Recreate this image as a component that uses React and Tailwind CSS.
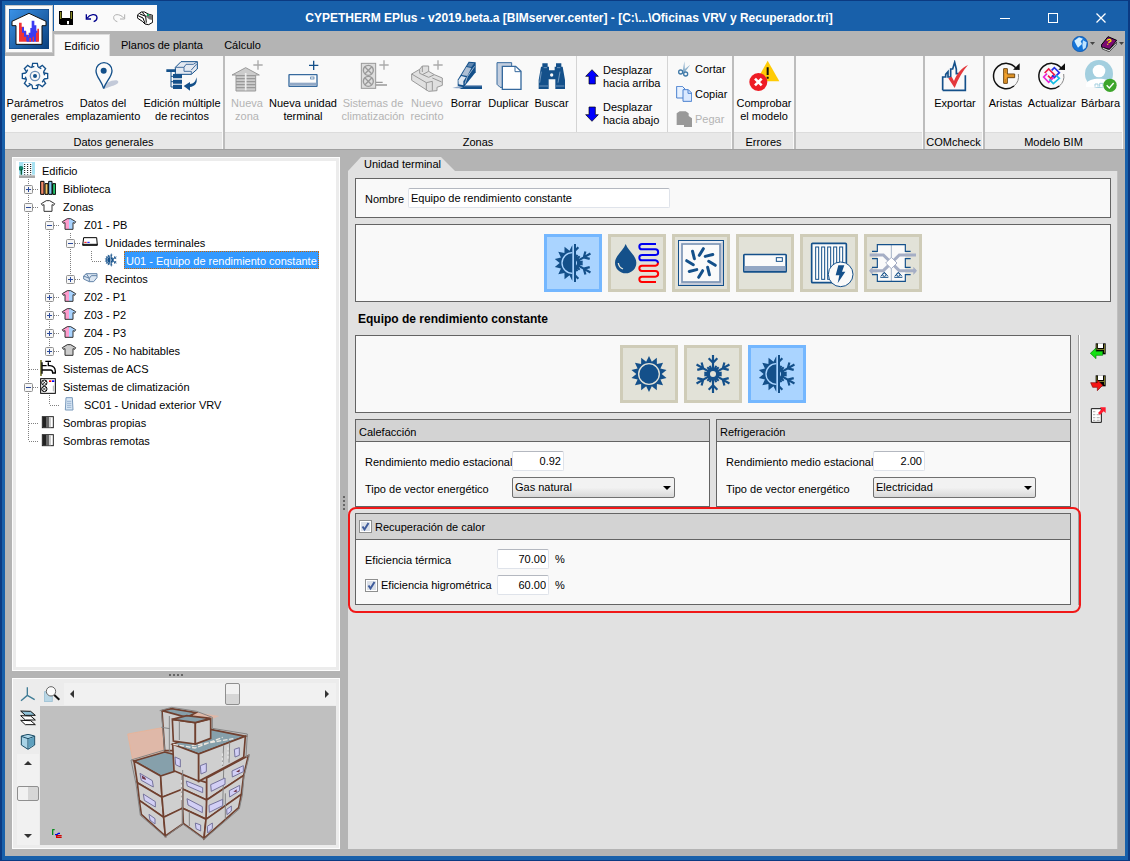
import { useState } from 'react'

const NAVY = '#14508a'

function Icon({ box, size = 'size-8', children }) {
  return (
    <svg viewBox={box} className={`${size} shrink-0`} fill="none" aria-hidden="true">
      {children}
    </svg>
  )
}

function starPoints(cx, cy, outer, inner, count) {
  const pts = []
  for (let i = 0; i < count * 2; i++) {
    const r = i % 2 === 0 ? outer : inner
    const a = (Math.PI * i) / count - Math.PI / 2
    pts.push(`${(cx + r * Math.cos(a)).toFixed(1)},${(cy + r * Math.sin(a)).toFixed(1)}`)
  }
  return pts.join(' ')
}

/* ---------- heating / cooling drawings ---------- */

function Sun({ ring }) {
  return (
    <>
      <polygon points={starPoints(0, 0, 54, 38, 14)} fill={NAVY} />
      <circle r="31" stroke={ring} strokeWidth="4" />
    </>
  )
}

function Snowflake({ hole }) {
  return (
    <>
      {[0, 60, 120, 180, 240, 300].map((a) => (
        <path
          key={a}
          transform={`rotate(${a})`}
          d="M0 -14V-57M0 -34L-13 -47M0 -34L13 -47M-7 -16L-9 -25M7 -16L9 -25"
          stroke={NAVY}
          strokeWidth="6.5"
        />
      ))}
      <circle r="20" fill={NAVY} />
      <circle r="9" fill={hole} />
    </>
  )
}

function SunSnow({ bg }) {
  return (
    <>
      <svg x="-78" y="-78" width="73" height="156" viewBox="-78 -78 73 156">
        <g transform="translate(-5 0)"><Sun ring={bg} /></g>
      </svg>
      <svg x="0" y="-78" width="78" height="156" viewBox="0 -78 78 156">
        <Snowflake hole={bg} />
      </svg>
      <path d="M3 -57V57" stroke={NAVY} strokeWidth="6" />
    </>
  )
}

function HeatCoolIcon({ bg }) {
  return <Icon box="-81 -78 156 156" size="size-[52px]"><SunSnow bg={bg} /></Icon>
}

const unitTypes = [
  { id: 'constante', label: 'Equipo de rendimiento constante', icon: <HeatCoolIcon bg="#aad4ff" /> },
  {
    id: 'agua',
    label: 'Agua',
    icon: (
      <Icon box="243 36 156 156" size="size-[52px]">
        <path d="M287 57C293 76 319 92 319 113A32 32 0 0 1 255 113C255 92 281 76 287 57Z" fill={NAVY} />
        <path d="M265 114C266 123 271 129 279 132" stroke="#e6e6da" strokeWidth="4" />
        <path d="M378 57H336A8 8 0 0 0 336 73H376A8 8 0 0 1 376 90H336A8 8 0 0 0 336 106H376A9 9 0 0 1 384 115" stroke="#0000f0" strokeWidth="6" />
        <path d="M384 113A9 9 0 0 1 376 122H336A8 8 0 0 0 336 138H376A8 8 0 0 1 376 155H336A8 8 0 0 0 336 171H378" stroke="#f00" strokeWidth="6" />
      </Icon>
    ),
  },
  {
    id: 'difusor',
    label: 'Difusor',
    icon: (
      <Icon box="435 36 156 156" size="size-[52px]">
        <rect x="445.500" y="46.500" width="135" height="135" fill="#c5cbd8" stroke={NAVY} strokeWidth="3" />
        <path d="M447 180V48H579L570 57H456V171Z" fill="#eceef4" />
        <rect x="456" y="57" width="114" height="114" fill="#fafafa" stroke="#7d95b5" strokeWidth="5" />
        {[0, 45, 90, 135, 180, 225, 270, 315].map((a) => (
          <path key={a} transform={`translate(513 114) rotate(${a})`} d="M-5 -23L7 -43" stroke={NAVY} strokeWidth="9" strokeLinecap="round" />
        ))}
      </Icon>
    ),
  },
  {
    id: 'split',
    label: 'Unidad interior',
    icon: (
      <Icon box="627 36 156 156" size="size-[52px]">
        <rect x="641.500" y="88.500" width="127" height="52" rx="2" fill="#fafafa" stroke={NAVY} strokeWidth="5" />
        <path d="M644 123H766V138H644Z" fill="#93a7c4" />
        <rect x="739" y="98" width="18" height="11" fill="#fff" stroke={NAVY} strokeWidth="3" />
      </Icon>
    ),
  },
  {
    id: 'electrico',
    label: 'Radiador eléctrico',
    icon: (
      <Icon box="819 36 156 156" size="size-[52px]">
        <rect x="845" y="55" width="104" height="118" rx="3" fill="#fafafa" stroke={NAVY} strokeWidth="5" />
        {[857, 875, 893, 911, 929].map((x) => (
          <rect key={x} x={x} y="66" width="9" height="97" fill="#fff" stroke={NAVY} strokeWidth="3" />
        ))}
        <circle cx="932" cy="148" r="37" fill="#fafafa" stroke={NAVY} strokeWidth="3" />
        <path d="M925 121H943L936 140H946L923 175L928 151H917Z" fill={NAVY} />
      </Icon>
    ),
  },
  {
    id: 'recuperador',
    label: 'Recuperador',
    icon: (
      <Icon box="1011 36 156 156" size="size-[52px]">
        <path d="M1042 58H1126V170H1042Z" fill="#fafafa" />
        <path d="M1084 59V170" stroke="#788eae" strokeWidth="2" />
        <path d="M1019 90H1060L1108 137H1157M1158 90H1108L1060 137H1022" stroke="#a5aec5" strokeWidth="9" />
        <path d="M1028 125L1017 137L1028 150ZM1150 125L1161 137L1150 150Z" fill="#a5aec5" />
        <path d="M1084 97L1101 114L1084 131L1067 114Z" fill="#fff" stroke="#a5aec5" strokeWidth="3" />
        <path d="M1026 79H1042V59H1126V79H1142M1026 101H1042V127H1026M1142 101H1126V127H1142M1026 149H1042V169H1126V149H1142" stroke={NAVY} strokeWidth="3.500" />
        {[1063, 1105].map((x) => (
          <g key={x} stroke={NAVY} strokeWidth="3">
            <circle cx={x} cy="149" r="5" />
            <path d={`M${x - 12} 157H${x + 12}M${x - 11} 154L${x} 142L${x + 11} 154`} />
          </g>
        ))}
      </Icon>
    ),
  },
]

const modes = [
  { id: 'calor', label: 'Calefacción', icon: (bg) => <Icon box="-78 -78 156 156" size="size-[52px]"><Sun ring={bg} /></Icon> },
  { id: 'frio', label: 'Refrigeración', icon: (bg) => <Icon box="-78 -78 156 156" size="size-[52px]"><Snowflake hole={bg} /></Icon> },
  { id: 'mixto', label: 'Calefacción y refrigeración', icon: (bg) => <HeatCoolIcon bg={bg} /> },
]

function TileButton({ label, active, onClick, children }) {
  return (
    <button
      type="button"
      aria-label={label}
      aria-pressed={active}
      onClick={onClick}
      className={`size-[58px] border-3 ${active ? 'border-[#74b7ff] bg-[#aad4ff]' : 'border-[#cfccb8] bg-[#e2e2d8]'}`}
    >
      {children}
    </button>
  )
}

/* ---------- ribbon icons ---------- */

function Plus({ x, y, color }) {
  return <path d={`M${x - 14} ${y}H${x + 14}M${x} ${y - 14}V${y + 14}`} stroke={color} strokeWidth="4" />
}

const GearIcon = (
  <Icon box="57 180 96 96">
    {[0, 45, 90, 135, 180, 225, 270, 315].map((a) => (
      <path key={a} transform={`rotate(${a} 105 228)`} d="M96 201L98 190H112L114 201" fill="#fff" stroke={NAVY} strokeWidth="4" />
    ))}
    <circle cx="105" cy="228" r="28" fill="#f9f9f9" />
    {[0, 45, 90, 135, 180, 225, 270, 315].map((a) => (
      <path key={a} transform={`rotate(${a} 105 228)`} d="M114 201L124 206" stroke={NAVY} strokeWidth="4" />
    ))}
    <circle cx="105" cy="228" r="14" stroke="#6d90b8" strokeWidth="4" />
    <circle cx="105" cy="228" r="6" fill={NAVY} />
  </Icon>
)

const PinIcon = (
  <Icon box="261 180 96 96">
    <path d="M312 267C316 248 332 240 350 241C362 246 350 255 336 258Z" fill="#c3cad9" />
    <path d="M311 266C306 244 288 231 288 212A23 23 0 0 1 336 212C336 231 317 244 311 266Z" fill="#fafafa" stroke={NAVY} strokeWidth="4" />
    <circle cx="311" cy="212" r="9" fill={NAVY} />
  </Icon>
)

const MultiEditIcon = (
  <Icon box="498 180 96 96">
    <path d="M526 202L543 185H592V207L574 223H526Z" fill="#e4e9f1" stroke={NAVY} strokeWidth="3" />
    <path d="M526 202H552L558 193H580L592 185M552 202V214H574V223M574 210L590 192" stroke="#456f9f" strokeWidth="3" />
    <path d="M499 208H528V216H499ZM519 222H546V235H519ZM519 239H546V251H519ZM519 254H546V267H519Z" fill={NAVY} />
    <path d="M513 216V261H519M513 229H519M513 245H519" stroke={NAVY} strokeWidth="3" />
    <path d="M589 232C594 250 584 260 570 261V272L551 258L570 246V252C580 252 587 246 589 232Z" fill={NAVY} />
  </Icon>
)

const NewZoneIcon = (
  <Icon box="33 30 96 96">
    <path d="M36 75L77 53L118 75H107V123H48V75Z" fill="#ccc" stroke="#999" strokeWidth="3" />
    <path d="M48 77H107M48 86H107M48 95H107M48 104H107M48 113H107" stroke="#999" strokeWidth="4" />
    <path d="M77 69V121" stroke="#eee" strokeWidth="5" />
    <Plus x={114} y={45} color="#aaa" />
  </Icon>
)

const NewUnitIcon = (
  <Icon box="201 30 96 96">
    <rect x="207" y="74" width="84" height="35" rx="1" fill="#fcfcfc" stroke="#376a9e" strokeWidth="4" />
    <path d="M209 98H289V107H209Z" fill="#91a8c6" />
    <rect x="272" y="81" width="10" height="6" stroke="#376a9e" strokeWidth="2" />
    <Plus x={281} y={46} color={NAVY} />
  </Icon>
)

const SystemsIcon = (
  <Icon box="411 30 96 96">
    <rect x="424" y="40" width="43" height="75" fill="#ddd" stroke="#999" strokeWidth="3" />
    {[61, 94].map((y) => (
      <g key={y} stroke="#999" strokeWidth="4">
        <circle cx="445" cy={y} r="15" />
        <path d={`M435 ${y - 10}L455 ${y + 10}M455 ${y - 10}L435 ${y + 10}`} />
      </g>
    ))}
    <path d="M468 97H488M468 105H501" stroke="#999" strokeWidth="4" />
    <Plus x={492} y={45} color="#aaa" />
  </Icon>
)

const NewRoomIcon = (
  <Icon box="572 30 96 96">
    <path d="M574 72L598 58L606 48H625V64L642 74L666 84V106L650 112V122L625 124L574 91Z" fill="#e0e0e0" stroke="#999" strokeWidth="3" />
    <path d="M574 72L618 98V121M618 98L636 94V122M598 58V70L625 82L642 74M606 48V66M625 64L606 74M636 84L664 96" stroke="#999" strokeWidth="3" />
    <Plus x={653} y={45} color="#aaa" />
  </Icon>
)

const EraseIcon = (
  <Icon box="690 30 96 96">
    <path d="M697 114L730 105H787V115H710Z" fill="#8ba5c5" />
    <path d="M735 109H787V117H718Z" fill={NAVY} />
    <path d="M713 89L746 35L767 37V67L731 112L713 107Z" fill={NAVY} />
    <path d="M725 75L739 51L754 54L742 78Z" fill="#aebfd4" />
    <path d="M715 91L724 78L738 82L730 94V106L716 103Z" fill="#dfe7f0" />
    <path d="M735 101L742 80L764 49" stroke="#9fb6d0" strokeWidth="3" />
    <path d="M741 49L754 51L763 40L748 38Z" fill="#5f86b0" />
  </Icon>
)

const DuplicateIcon = (
  <Icon box="817 30 96 96">
    <path d="M829 38H873V112H838L829 103Z" fill="#c4cfdf" stroke="#376a9e" strokeWidth="3" />
    <path d="M845 49H885L901 64V118H845Z" fill="#fff" stroke="#376a9e" strokeWidth="4" />
    <path d="M883 49V65H901" stroke="#376a9e" strokeWidth="3" />
  </Icon>
)

const SearchIcon = (
  <Icon box="946 30 96 96">
    <path d="M965 40H981V50H985V61H1002V50H1006V40H1022V50H1026L1033 90V117H1004V88H984V117H954V90L961 50H965Z" fill={NAVY} />
    <path d="M962 65L957 98M1018 65L1012 98M969 53H979M1009 53H1019M956 108H982M1006 108H1031" stroke="#9ab6d3" strokeWidth="2" />
    <circle cx="993" cy="75" r="5" fill="#f9f9f9" />
  </Icon>
)

const ErrorsIcon = (
  <Icon box="534 30 96 96">
    <path d="M593 32L628 94H559Z" fill="#ffcb05" />
    <path d="M593 52V75M593 80V86" stroke="#111" strokeWidth="6" />
    <circle cx="565" cy="96" r="27" fill="#ee1c25" />
    <path d="M555 86L575 106M575 86L555 106" stroke="#fff" strokeWidth="8" />
  </Icon>
)

const ExportIcon = (
  <Icon box="114 180 96 96">
    <path d="M125 271V231H134V223L141 215V231H149V207H155L161 187L166 207V221H180M193 226V271H125" stroke={NAVY} strokeWidth="5" />
    <path d="M142 235L152 230L159 243C167 223 181 204 201 195C185 213 172 236 161 264Z" fill="#e4383c" />
  </Icon>
)

function RefreshRing({ x, y }) {
  return (
    <>
      <path d={`M${x + 24} ${y + 30}A38 38 0 1 1 ${x + 29} ${y - 25}`} stroke="#111" strokeWidth="4.5" />
      <path d={`M${x + 37} ${y - 6}A38 38 0 0 1 ${x + 24} ${y + 30}`} stroke="#888" strokeWidth="3" />
      <path d={`M${x + 21} ${y - 19}L${x + 41} ${y - 18}V${y - 38}Z`} fill="#111" />
    </>
  )
}

const EdgesIcon = (
  <Icon box="267 180 96 96">
    <RefreshRing x={315} y={228} />
    <path d="M308 206H319V222H341V233H319V250H308Z" fill="#f1a12c" stroke="#6b4514" strokeWidth="3" />
    <path d="M319 228H341M313 209V219M313 237V247" stroke="#b2701a" strokeWidth="2" />
  </Icon>
)

const UpdateIcon = (
  <Icon box="408 180 96 96">
    <RefreshRing x={454} y={228} />
    <path d="M434 219L446 207L463 224L452 235L444 227" stroke="#f01848" strokeWidth="5" />
    <path d="M455 211L463 203L478 218L463 233L456 226" stroke="#2330e8" strokeWidth="5" />
    <path d="M441 221L431 231L446 247L461 232" stroke="#e925d8" strokeWidth="5" />
    <path d="M448 238L460 251L478 235L468 226" stroke="#12bfe4" strokeWidth="5" />
  </Icon>
)

const UserIcon = (
  <Icon box="552 180 96 96">
    <circle cx="594" cy="222" r="42" fill="#a3cfdf" />
    <circle cx="594" cy="213" r="19" fill="#fff" />
    <path d="M555 261V252C560 240 575 236 594 236C613 236 628 240 633 252V261Z" fill="#fff" />
    <path d="M582 260V252H591V260M596 260V250H606V260" stroke="#a3cfdf" strokeWidth="3" />
    <circle cx="627" cy="256" r="20" fill="#3da52b" />
    <path d="M617 256L625 264L638 249" stroke="#fff" strokeWidth="4" />
  </Icon>
)

const MoveUpIcon = (
  <Icon box="41 38 48 48" size="size-4">
    <path d="M65 40L84 60H75V83H56V60H46Z" fill="#0000fe" stroke="#000" strokeWidth="2" />
  </Icon>
)

const MoveDownIcon = (
  <Icon box="41 151 48 48" size="size-4">
    <path d="M65 197L84 177H75V154H56V177H46Z" fill="#0000fe" stroke="#000" strokeWidth="2" />
  </Icon>
)

const CutIcon = (
  <Icon box="317 33 48 48" size="size-4">
    <path d="M342 34L344 64L337 64ZM360 44L341 70L336 63Z" fill="#8fb2cd" />
    <circle cx="331" cy="66" r="6" stroke="#3f79a8" strokeWidth="4" />
    <circle cx="346" cy="72" r="6" stroke="#3f79a8" strokeWidth="4" />
  </Icon>
)

const CopyIcon = (
  <Icon box="317 108 48 48" size="size-4">
    <path d="M319 109H336L344 117V144H319Z" fill="#e8f2ff" stroke="#4a80cf" strokeWidth="3" />
    <path d="M338 119H354L364 129V154H338Z" fill="#dbe9ff" stroke="#4a80cf" strokeWidth="3" />
    <path d="M353 119V130H364" stroke="#4a80cf" strokeWidth="3" />
  </Icon>
)

const PasteIcon = (
  <Icon box="317 183 48 48" size="size-4">
    <path d="M319 190L328 184H346L355 190V198L365 205V231H341V225H319Z" fill="#999" />
  </Icon>
)

/* ---------- ribbon ---------- */

function RibbonButton({ icon, lines, width, disabled }) {
  return (
    <button
      type="button"
      disabled={disabled}
      className={`${width} flex shrink-0 flex-col items-center pt-1 leading-[13px] whitespace-nowrap disabled:text-[#b4b4b4]`}
    >
      {icon}
      <span className="mt-[5px] flex flex-col items-center">
        {lines.map((line) => <span key={line}>{line}</span>)}
      </span>
    </button>
  )
}

function RibbonGroup({ title, className, children }) {
  return (
    <section className={`flex flex-col border-r-2 border-[#bdbdbd] ${className}`}>
      <div className="flex h-[76px]">{children}</div>
      <h2 className="mr-px h-[17px] border-t border-[#dcdcdc] bg-[#e8e8e8] text-center leading-[18px]">{title}</h2>
    </section>
  )
}

function SmallCommand({ icon, disabled, children }) {
  return (
    <button type="button" disabled={disabled} className="flex items-center gap-[3px] text-left leading-[13px] disabled:text-[#b4b4b4]">
      {icon}
      <span>{children}</span>
    </button>
  )
}

function Ribbon() {
  return (
    <div className="flex border-b border-[#a0a0a0] bg-[#f9f9f9]">
      <RibbonGroup title="Datos generales" className="w-[220px]">
        <RibbonButton width="w-[60px]" icon={GearIcon} lines={['Parámetros', 'generales']} />
        <RibbonButton width="w-[76px]" icon={PinIcon} lines={['Datos del', 'emplazamiento']} />
        <RibbonButton width="w-[82px]" icon={MultiEditIcon} lines={['Edición múltiple', 'de recintos']} />
      </RibbonGroup>
      <RibbonGroup title="Zonas" className="w-[509px]">
        <RibbonButton width="w-[44px]" icon={NewZoneIcon} lines={['Nueva', 'zona']} disabled />
        <RibbonButton width="w-[68px]" icon={NewUnitIcon} lines={['Nueva unidad', 'terminal']} />
        <RibbonButton width="w-[72px]" icon={SystemsIcon} lines={['Sistemas de', 'climatización']} disabled />
        <RibbonButton width="w-[36px]" icon={NewRoomIcon} lines={['Nuevo', 'recinto']} disabled />
        <RibbonButton width="w-[42px]" icon={EraseIcon} lines={['Borrar']} />
        <RibbonButton width="w-[43px]" icon={DuplicateIcon} lines={['Duplicar']} />
        <RibbonButton width="w-[43px]" icon={SearchIcon} lines={['Buscar']} />
        <div className="ml-[3px] flex w-[92px] flex-col gap-[11px] border-x border-[#d4d4d4] pt-2 pl-[7px]">
          <SmallCommand icon={MoveUpIcon}>Desplazar<br />hacia arriba</SmallCommand>
          <SmallCommand icon={MoveDownIcon}>Desplazar<br />hacia abajo</SmallCommand>
        </div>
        <div className="flex flex-col gap-[9px] pt-[5px] pl-2">
          <SmallCommand icon={CutIcon}>Cortar</SmallCommand>
          <SmallCommand icon={CopyIcon}>Copiar</SmallCommand>
          <SmallCommand icon={PasteIcon} disabled>Pegar</SmallCommand>
        </div>
      </RibbonGroup>
      <RibbonGroup title="Errores" className="w-[62px]">
        <RibbonButton width="w-[60px]" icon={ErrorsIcon} lines={['Comprobar', 'el modelo']} />
      </RibbonGroup>
      <RibbonGroup title="" className="flex-1" />
      <RibbonGroup title="COMcheck" className="w-[60px]">
        <RibbonButton width="w-[60px]" icon={ExportIcon} lines={['Exportar']} />
      </RibbonGroup>
      <RibbonGroup title="Modelo BIM" className="w-[140px]">
        <RibbonButton width="w-[41px]" icon={EdgesIcon} lines={['Aristas']} />
        <RibbonButton width="w-[52px]" icon={UpdateIcon} lines={['Actualizar']} />
        <RibbonButton width="w-[45px]" icon={UserIcon} lines={['Bárbara']} />
      </RibbonGroup>
    </div>
  )
}

/* ---------- title bar ---------- */

function AppLogo() {
  return (
    <div className="absolute top-1 left-0 z-10 size-12 border border-[#c8c8c8] bg-[#fafafa] p-[3px]">
      <svg viewBox="27 27 120 120" className="size-10" aria-hidden="true">
        <defs>
          <linearGradient id="logoBg" x1="0" y1="0" x2="1" y2="1">
            <stop offset="0" stopColor="#3b93e8" />
            <stop offset="1" stopColor="#0a3f7c" />
          </linearGradient>
        </defs>
        <rect x="27" y="27" width="120" height="120" fill="url(#logoBg)" stroke="#0c3f78" strokeWidth="3" />
        <path d="M87 40L138 64V77H126V133H48V77H36V64Z" fill="#fff" stroke="#111" strokeWidth="3" />
        <path d="M57 125V68H65V80H72V94H79V105H87V114H94V125Z" fill="#f03434" />
        <path d="M80 125V112H86V98H91V84H95V62H103V76H109V92H113V125Z" fill="#3b3bf2" />
        <path d="M66 82H72V92H78V104H84V122H79V110H72V98H66Z" fill="#3b3bf2" />
        <path d="M108 125V98H112V86H117V125ZM98 125V110H102V125ZM88 125V114H93V125Z" fill="#f03434" />
      </svg>
    </div>
  )
}

function QuickAccess() {
  return (
    <div className="ml-[49px] flex h-[26px] w-[103px] items-center justify-between bg-[#fafafa] px-[4px]">
      <button type="button" aria-label="Guardar">
        <Icon box="174 30 48 48" size="size-4">
          <path d="M177 33H219V75H182L177 70Z" fill="#000" />
          <path d="M186 33H210V54H186Z" fill="#fff" />
          <path d="M180 36H184V57H212V36H216V57H180Z" fill="#8a8a28" />
          <path d="M201 63H207V73H201Z" fill="#fff" />
        </Icon>
      </button>
      <button type="button" aria-label="Deshacer">
        <Icon box="252 30 48 48" size="size-4">
          <path d="M259 43V57H273M262 54C268 44 290 38 291 53C291 60 286 63 281 65" stroke="#00008c" strokeWidth="4" />
        </Icon>
      </button>
      <button type="button" aria-label="Rehacer" disabled>
        <Icon box="330 30 48 48" size="size-4">
          <path d="M371 43V57H357M368 54C362 44 338 38 338 53C338 60 343 63 349 65" stroke="#b0b0b0" strokeWidth="3" />
        </Icon>
      </button>
      <button type="button" aria-label="Imprimir">
        <Icon box="408 30 48 48" size="size-4">
          <path d="M409 45L421 36H431L441 42L455 46V67L443 74L432 72L424 64L409 54Z" fill="#fff" stroke="#000" strokeWidth="3" />
          <path d="M434 48L444 43L454 48V60L444 58Z" fill="#777" />
          <path d="M411 47L426 54L432 70M417 42L434 49L436 68M424 37L434 49" stroke="#000" strokeWidth="3" />
          <path d="M438 42H444V48H438Z" fill="#17a55c" />
        </Icon>
      </button>
    </div>
  )
}

function Header() {
  return (
    <header className="relative">
      <AppLogo />
      <div className="flex h-[30px] pt-1">
        <QuickAccess />
        <h1 className="flex-1 text-center text-[12px] leading-[27px] font-bold text-white">
          CYPETHERM EPlus - v2019.beta.a [BIMserver.center] - [C:\...\Oficinas VRV y Recuperador.tri]
        </h1>
        <div className="flex h-[26px] w-36 text-white">
          <button type="button" aria-label="Minimizar" className="grid flex-1 place-items-center">
            <Icon box="0 0 12 12" size="size-3"><path d="M1 6.500H11" stroke="#fff" /></Icon>
          </button>
          <button type="button" aria-label="Maximizar" className="grid flex-1 place-items-center">
            <Icon box="0 0 12 12" size="size-3"><rect x="1.500" y="1.500" width="9" height="9" stroke="#fff" /></Icon>
          </button>
          <button type="button" aria-label="Cerrar" className="grid flex-1 place-items-center">
            <Icon box="0 0 12 12" size="size-3"><path d="M1.500 1.500L10.500 10.500M10.500 1.500L1.500 10.500" stroke="#fff" strokeWidth="1.300" /></Icon>
          </button>
        </div>
      </div>
      <div className="flex h-[25px] items-end bg-[#b4b4b4] pl-[49px]">
        <nav className="flex h-[22px] leading-5">
          <button type="button" className="w-14 border-x border-t border-[#dcdcdc] bg-[#f9f9f9]">Edificio</button>
          <button type="button" className="w-[104px]">Planos de planta</button>
          <button type="button" className="w-[57px]">Cálculo</button>
        </nav>
        <div className="ml-auto flex h-full items-center gap-1.5 pr-px">
          <button type="button" aria-label="Idioma" className="flex items-center gap-0.5">
            <Icon box="515 105 48 48" size="size-4">
              <circle cx="539" cy="129" r="23" fill="#1474d8" stroke="#0b4fa5" strokeWidth="2" />
              <path d="M522 119L536 109L548 113L541 121L545 129L533 140L527 130Z" fill="#d6efff" />
              <path d="M548 118L559 124L556 140L548 146L546 132Z" fill="#bfe3ff" />
            </Icon>
            <Icon box="0 0 5 3" size="h-[3px] w-[5px]"><path d="M0 0H5L2.500 3Z" fill="#444" /></Icon>
          </button>
          <button type="button" aria-label="Ayuda" className="flex items-center gap-0.5">
            <Icon box="600 105 48 48" size="size-4">
              <path d="M601 132L621 107L647 118L625 145L601 138Z" fill="#7a0a72" stroke="#000" strokeWidth="3" />
              <path d="M604 139L625 147L647 124V129L625 152L604 144Z" fill="#fff" stroke="#000" strokeWidth="2" />
              <path d="M618 119C622 112 633 116 629 121L622 125M620 128V131" stroke="#ffe600" strokeWidth="4" />
            </Icon>
            <Icon box="0 0 5 3" size="h-[3px] w-[5px]"><path d="M0 0H5L2.500 3Z" fill="#444" /></Icon>
          </button>
        </div>
      </div>
    </header>
  )
}

/* ---------- project tree ---------- */

function HouseIcon({ left, right }) {
  return (
    <Icon box="183 201 48 48" size="size-4">
      <path d="M207 208H202L187 218L190 223L195 221V241H207Z" fill={left} />
      <path d="M207 208H212L227 218L224 223L219 221V241H207Z" fill={right} />
      <path d="M202 209H212L227 218L224 223L219 221V241H195V221L190 223L187 218Z" stroke="#333" strokeWidth="3" />
    </Icon>
  )
}

const BuildingIcon = (
  <Icon box="57 39 48 48" size="size-4">
    <path d="M57 39H105V77H57Z" fill="#a8e2f2" />
    <path d="M70 41H96V77H70Z" fill="#fff" />
    <path d="M74 45V77M83 45V77M92 45V77" stroke="#000" strokeWidth="3" strokeDasharray="3 3" />
    <path d="M57 79H105V87H57Z" fill="#a9a9a9" />
    <circle cx="63" cy="58" r="7" fill="#12826a" />
    <path d="M64 60V77" stroke="#0c5b34" strokeWidth="4" />
  </Icon>
)

const BooksIcon = (
  <Icon box="120 93 48 48" size="size-4">
    <g stroke="#000" strokeWidth="3">
      <path d="M122 97H132V136H122Z" fill="#f08a68" />
      <path d="M135 104H144V136H135Z" fill="#f2c566" />
      <path d="M146 97H156V136H146Z" fill="#7fc4ee" />
      <path d="M158 104H167V136H158Z" fill="#27c46c" />
    </g>
  </Icon>
)

const TerminalIcon = (
  <Icon box="246 255 48 48" size="size-4">
    <path d="M251 266H290L292 289H248Z" fill="#fff" stroke="#000" strokeWidth="3" />
    <path d="M248 286H292" stroke="#000" strokeWidth="3" />
    <path d="M253 280H260" stroke="#f00" strokeWidth="3" />
    <path d="M262 280H269" stroke="#00f" strokeWidth="3" />
  </Icon>
)

const RoomsIcon = (
  <Icon box="246 363 48 48" size="size-4">
    <path d="M251 381L259 374H291V386L281 398H268L251 390Z" fill="#dbe6f2" stroke="#6484a8" strokeWidth="3" />
    <path d="M251 381L268 388V398M268 388L274 380H291M259 374L268 388" stroke="#6484a8" strokeWidth="3" />
  </Icon>
)

const TapIcon = (
  <Icon box="120 633 48 48" size="size-4">
    <path d="M120 633H126V681H120Z" fill="#8a8a4c" />
    <path d="M126 640V674M126 650H140M126 663H151C157 663 158 667 158 672H166C167 657 160 650 150 650H145V640M136 637H153" stroke="#000" strokeWidth="4" />
  </Icon>
)

const ClimateIcon = (
  <Icon box="120 687 48 48" size="size-4">
    <rect x="122" y="689" width="44" height="44" fill="#fff" stroke="#000" strokeWidth="3" />
    <circle cx="133" cy="701" r="8" stroke="#000" strokeWidth="3" />
    <circle cx="133" cy="720" r="8" stroke="#000" strokeWidth="3" />
    <path d="M127 695L139 707M139 695L127 707M127 714L139 726M139 714L127 726" stroke="#000" strokeWidth="2" />
    <path d="M147 694H154V699H147Z" fill="#f00" />
    <path d="M156 694H163V699H156Z" fill="#00f" />
    <path d="M160 710V727" stroke="#888" strokeWidth="2" />
  </Icon>
)

const OutdoorIcon = (
  <Icon box="183 741 48 48" size="size-4">
    <path d="M198 746H217L219 783H196Z" fill="#d8e7f5" stroke="#7a9abc" strokeWidth="3" />
    <path d="M201 757H214M201 763H214M201 769H214M201 775H214" stroke="#7a9abc" strokeWidth="2" />
  </Icon>
)

const ShadowIcon = (
  <Icon box="120 795 48 48" size="size-4">
    <rect x="127" y="803" width="33" height="33" fill="#fff" stroke="#222" strokeWidth="3" />
    <path d="M128 804H138V835H128Z" fill="#222" />
    <path d="M138 804H147V835H138Z" fill="#666" />
    <path d="M147 804H153V835H147Z" fill="#ccc" />
  </Icon>
)

const UnitIcon = <Icon box="-72 -72 144 144" size="size-4"><SunSnow bg="#fff" /></Icon>

const pinkBlue = <HouseIcon left="#ff9dcd" right="#a9d4ff" />

const tree = [
  { label: 'Edificio', icon: BuildingIcon, guides: [] },
  { label: 'Biblioteca', icon: BooksIcon, guides: ['tee+'] },
  { label: 'Zonas', icon: <HouseIcon left="#fff" right="#fff" />, guides: ['tee-'] },
  { label: 'Z01 - PB', icon: pinkBlue, guides: ['v', 'tee-'] },
  { label: 'Unidades terminales', icon: TerminalIcon, guides: ['v', 'v', 'tee-'] },
  { label: 'U01 - Equipo de rendimiento constante', icon: UnitIcon, guides: ['v', 'v', 'v', 'end'] },
  { label: 'Recintos', icon: RoomsIcon, guides: ['v', 'v', 'end+'] },
  { label: 'Z02 - P1', icon: pinkBlue, guides: ['v', 'tee+'] },
  { label: 'Z03 - P2', icon: pinkBlue, guides: ['v', 'tee+'] },
  { label: 'Z04 - P3', icon: pinkBlue, guides: ['v', 'tee+'] },
  { label: 'Z05 - No habitables', icon: <HouseIcon left="#ccc" right="#ccc" />, guides: ['v', 'end+'] },
  { label: 'Sistemas de ACS', icon: TapIcon, guides: ['tee'] },
  { label: 'Sistemas de climatización', icon: ClimateIcon, guides: ['tee-'] },
  { label: 'SC01 - Unidad exterior VRV', icon: OutdoorIcon, guides: ['v', 'end'] },
  { label: 'Sombras propias', icon: ShadowIcon, guides: ['tee'] },
  { label: 'Sombras remotas', icon: ShadowIcon, guides: ['end'] },
]

function Guide({ kind }) {
  const down = kind.startsWith('v') || kind.startsWith('tee')
  return (
    <svg viewBox="0 0 21 18" className="h-[18px] w-[21px] shrink-0" fill="none" aria-hidden="true">
      <path d={`M10.500 0V${down ? 18 : 10}`} stroke="#808080" strokeDasharray="1 1" />
      {kind !== 'v' && <path d="M11 10.500H21" stroke="#808080" strokeDasharray="1 1" />}
      {/[+-]$/.test(kind) && (
        <>
          <rect x="6.500" y="6.500" width="8" height="8" rx="1" fill="#f6f6f6" stroke="#919191" />
          <path d="M8 10.500H13" stroke="#2b4a9b" />
        </>
      )}
      {kind.endsWith('+') && <path d="M10.500 8V13" stroke="#2b4a9b" />}
    </svg>
  )
}

function ProjectTree() {
  const [selected, setSelected] = useState(5)
  return (
    <div className="flex-1 border border-[#fdfdfd] bg-[#ececec] p-[3px]">
      <ul className="h-full bg-white">
        {tree.map((node, i) => (
          <li key={node.label} className="flex h-[18px] items-center pl-[2px]">
            {node.guides.map((g, k) => <Guide key={k} kind={g} />)}
            <span className="ml-px flex">{node.icon}</span>
            <button
              type="button"
              onClick={() => setSelected(i)}
              className={`ml-[5px] h-[18px] border px-px text-left leading-[18px] whitespace-nowrap ${
                i === selected ? 'border-dotted border-[#cc6600] bg-[#3399ff] text-white' : 'border-transparent'
              }`}
            >
              {node.label}
            </button>
          </li>
        ))}
      </ul>
    </div>
  )
}

/* ---------- 3D view ---------- */

function BuildingModel() {
  const wall = { fill: '#cfcfcf', stroke: '#70402f', strokeWidth: 5 }
  const roof = { fill: '#86a0ab', stroke: '#70402f', strokeWidth: 5 }
  return (
    <svg viewBox="120 138 888 417" className="h-[139px] w-[296px]" fill="none" aria-label="Modelo 3D">
      <path d="M383 222L486 203L494 272L398 299Z" fill="#dfb8a8" stroke="#f0b090" strokeWidth="2" />
      <path d="M560 152L658 168L630 180L560 170Z" fill="#dfb8a8" />
      {/* rear tower */}
      <path d="M486 153L520 150L576 165V272L494 272Z" {...wall} />
      <path d="M486 152L515 146L588 158L560 172Z" {...roof} />
      {/* left wing */}
      <path d="M402 303L494 276L548 290V345L482 348Z" {...roof} />
      <path d="M402 303L482 348L486 412L412 368Z" {...wall} />
      <path d="M482 348L548 326V390L486 412Z" {...wall} />
      <path d="M412 368L486 412L491 472L418 421Z" {...wall} />
      <path d="M486 412L548 387V446L491 472Z" {...wall} />
      <path d="M418 421L491 472L496 528L424 463Z" {...wall} />
      <path d="M491 472L548 444V492L496 528Z" {...wall} />
      {/* right wing */}
      <path d="M548 344L620 368V420L548 387Z" {...wall} />
      <path d="M548 387L620 420V478L548 445Z" {...wall} />
      <path d="M548 445L618 478L612 535L550 490Z" {...wall} />
      <path d="M620 354L745 287L731 346L620 420Z" {...wall} />
      <path d="M620 420L731 346L724 403L618 478Z" {...wall} />
      <path d="M618 478L724 403L716 443L612 535Z" {...wall} />
      {/* upper block */}
      <path d="M518 253L632 208L736 229L596 282Z" {...roof} />
      <path d="M518 253L596 282V364L522 332Z" {...wall} />
      <path d="M596 282L736 229L731 292L596 364Z" {...wall} />
      <path d="M520 253L585 264L668 232M575 257L700 236" stroke="#ece6df" strokeWidth="4" strokeDasharray="14 5" />
      <path d="M517 178L586 188V252L520 243Z" {...wall} />
      <path d="M586 188L632 177V235L586 252Z" {...wall} />
      <path d="M517 178L560 167L632 175L586 188Z" {...roof} />
      {/* outlines of the bounding spaces */}
      <path d="M479 152L515 142L590 154L637 172V205L742 222L738 290L748 286L732 350L727 405L718 447L612 538L548 492L496 531L421 466L408 372L393 300L494 270L484 155M508 168V276M510 206L484 202M538 186V240M548 330V492M671 255L668 318M689 247L687 308M671 330L668 440M676 400V478M568 455V498" stroke="#858585" strokeWidth="3" />
      <path d="M667 280V320M684 262V300M544 360V420" stroke="#eee" strokeWidth="3" strokeDasharray="8 5" />
      {/* windows */}
      <g fill="#d2cff5" stroke="#75739c" strokeWidth="3">
        <path d="M420 340L457 362L460 381L424 361Z" />
        <path d="M430 402L466 425V441L433 421Z" />
        <path d="M447 463L465 476V492L450 480Z" />
        <path d="M525 291L541 298V321L527 314Z" />
        <path d="M601 317L619 310V335L603 342Z" />
        <path d="M703 268L718 263V286L705 291Z" />
        <path d="M559 363L608 383V398L562 378Z" />
        <path d="M561 416L607 440V458L564 435Z" />
        <path d="M632 374L675 354V373L634 394Z" />
        <path d="M627 436L668 418V437L628 457Z" />
        <path d="M696 333L730 317V335L697 351Z" />
        <path d="M688 392L719 376V392L689 411Z" />
        <path d="M586 489L602 495V513L588 506Z" />
        <path d="M622 499L637 489V505L623 519Z" />
        <path d="M680 448L694 438V453L681 464Z" />
      </g>
      <path d="M425 346L436 353L438 360L427 356ZM708 335L720 328L718 337ZM700 395L710 388V396Z" fill="#703648" />
      {/* axis triad */}
      <path d="M158 508V525M158 509H164" stroke="#0a8a20" strokeWidth="4" />
      <path d="M165 524H171L175 520H180" stroke="#0000d8" strokeWidth="4" />
      <path d="M185 527H170V532H185" stroke="#d00000" strokeWidth="4" />
    </svg>
  )
}

function Arrow({ d }) {
  return <Icon box="0 0 8 8" size="size-2"><path d={d} fill="#333" /></Icon>
}

function ModelView() {
  return (
    <div className="border border-[#fdfdfd] bg-[#ececec] p-[3px]">
      <div className="flex h-6 items-center">
        <button type="button" aria-label="Ejes" className="grid w-6 place-items-center">
          <Icon box="60 78 48 48" size="size-4">
            <path d="M82 82V106L63 122M82 106L104 119" stroke="#3f7c96" strokeWidth="4" />
          </Icon>
        </button>
        <button type="button" aria-label="Zoom" className="grid w-6 place-items-center">
          <Icon box="132 78 48 48" size="size-4">
            <path d="M133 95H157V125H133Z" fill="#b9d7e6" stroke="#89b4cb" strokeWidth="2" />
            <circle cx="153" cy="94" r="14" fill="#fbfbfb" stroke="#666" strokeWidth="3" />
            <path d="M163 105L178 119" stroke="#111" strokeWidth="6" />
          </Icon>
        </button>
        <div className="flex h-[22px] flex-1 items-center bg-[#f1f1f1] pl-1">
          <Arrow d="M6 0V8L2 4Z" />
          <span className="ml-auto h-[22px] w-[15px] rounded-xs border border-[#8f8f8f] bg-linear-to-b from-[#f1f1f1] from-50% to-[#d6d6d6] to-50%" />
          <span className="ml-[83px] mr-[5px]"><Arrow d="M2 0V8L6 4Z" /></span>
        </div>
      </div>
      <div className="flex">
        <div className="flex w-6 flex-col items-center">
          <button type="button" aria-label="Capas" className="grid h-6 place-items-center">
            <Icon box="60 150 48 48" size="size-4">
              <g stroke="#111" strokeWidth="3">
                <path d="M62 181L92 182L106 194H76Z" fill="#fff" />
                <path d="M62 167L92 168L106 180H76Z" fill="#fff" />
                <path d="M62 153L92 154L106 166H76Z" fill="#8fc0d6" />
              </g>
            </Icon>
          </button>
          <button type="button" aria-label="Vista" className="grid h-6 place-items-center">
            <Icon box="60 222 48 48" size="size-4">
              <path d="M64 228L84 223L104 228V255L84 268L64 255Z" fill="#a9d3e6" stroke="#1c4d66" strokeWidth="3" />
              <path d="M64 229L84 236L104 229M84 236V267" stroke="#1c4d66" strokeWidth="3" />
              <path d="M86 238L102 232V254L86 264Z" fill="#5ea0be" />
            </Icon>
          </button>
          <div className="flex w-[22px] flex-1 flex-col items-center bg-[#f1f1f1] py-[5px]">
            <Arrow d="M0 6H8L4 2Z" />
            <span className="mt-[19px] h-[15px] w-[22px] rounded-xs border border-[#8f8f8f] bg-linear-to-r from-[#f1f1f1] from-50% to-[#d6d6d6] to-50%" />
            <span className="mt-auto"><Arrow d="M0 2H8L4 6Z" /></span>
          </div>
        </div>
        <div className="flex-1 bg-[#c0c0c0]"><BuildingModel /></div>
      </div>
    </div>
  )
}

/* ---------- form ---------- */

const panel = 'border border-[#646464] bg-[#f9f9f9]'
const field = 'h-5 border border-[#dfe3ea] border-t-[#b4b8c0] rounded-xs bg-white px-0.5 leading-[18px] outline-none'

function NumberField({ id, defaultValue, label }) {
  return (
    <input id={id} aria-label={label} defaultValue={defaultValue} className={`${field} w-[52px] text-right`} />
  )
}

function CheckBox({ id, checked, onChange }) {
  return (
    <span className="relative size-[13px] shrink-0">
      <input
        id={id}
        type="checkbox"
        checked={checked}
        onChange={(e) => onChange(e.target.checked)}
        className="block size-[13px] appearance-none border border-[#8e8f8f] bg-[#dbe0e8] shadow-[inset_0_0_0_1px_#fff]"
      />
      {checked && (
        <svg viewBox="0 0 13 13" className="pointer-events-none absolute inset-0" fill="none" aria-hidden="true">
          <path d="M3.500 6.500L5.500 9.500L9.500 3" stroke="#3f5c9c" strokeWidth="2" />
        </svg>
      )}
    </span>
  )
}

function EnergyCard({ title, prefix, value, vector }) {
  return (
    <section className={panel}>
      <h3 className="h-[22px] border-b border-[#646464] bg-[#d3d3d3] pl-[3px] leading-6">{title}</h3>
      <div className="flex flex-col gap-1.5 px-[9px] pt-[9px] pb-2">
        <div className="flex items-center">
          <label htmlFor={`${prefix}-rend`} className="w-[147px] pt-0.5 whitespace-nowrap">Rendimiento medio estacional</label>
          <NumberField id={`${prefix}-rend`} defaultValue={value} />
        </div>
        <div className="flex items-center">
          <label htmlFor={`${prefix}-vector`} className="w-[147px] pt-0.5">Tipo de vector energético</label>
          <div className="relative">
            <select
              id={`${prefix}-vector`}
              defaultValue={vector}
              className="block h-[21px] w-[163px] appearance-none rounded-xs border border-[#707070] bg-linear-to-b from-[#f2f2f2] from-50% to-[#d8d8d8] pl-[2px] leading-[19px] outline-none"
            >
              <option>Gas natural</option>
              <option>Electricidad</option>
            </select>
            <svg viewBox="0 0 8 4" className="pointer-events-none absolute top-[9px] right-1 h-1 w-2" aria-hidden="true">
              <path d="M0 0H8L4 4Z" />
            </svg>
          </div>
        </div>
      </div>
    </section>
  )
}

function HeatRecovery() {
  const [enabled, setEnabled] = useState(true)
  const [higro, setHigro] = useState(true)
  return (
    <section className={`relative ${panel}`}>
      <div className="pointer-events-none absolute -top-[7px] -right-[11px] -bottom-[9px] -left-[8px] z-10 rounded-lg border-2 border-[#f01818]" />
      <h3 className="flex h-[26px] items-center gap-[3px] border-b border-[#646464] bg-[#d3d3d3] pl-[3px]">
        <CheckBox id="recuperacion" checked={enabled} onChange={setEnabled} />
        <label htmlFor="recuperacion">Recuperación de calor</label>
      </h3>
      <div className="flex flex-col gap-1.5 p-[9px]">
        <div className="flex items-center">
          <label htmlFor="termica" className="w-[132px] pt-0.5">Eficiencia térmica</label>
          <NumberField id="termica" defaultValue="70.00" />
          <span className="ml-1.5">%</span>
        </div>
        <div className="flex items-center">
          <span className="flex w-[132px] items-center gap-[3px]">
            <CheckBox id="higro" checked={higro} onChange={setHigro} />
            <label htmlFor="higro" className="whitespace-nowrap">Eficiencia higrométrica</label>
          </span>
          <NumberField id="higro-value" label="Eficiencia higrométrica (%)" defaultValue="60.00" />
          <span className="ml-1.5">%</span>
        </div>
      </div>
    </section>
  )
}

function Floppy() {
  return (
    <>
      <path d="M17 1H47V34H17Z" fill="#000" />
      <path d="M24 1H39V15H24Z" fill="#fff" />
      <path d="M19 4H22V18H42V4H45V29H42V21H19Z" fill="#77772a" />
    </>
  )
}

function SideActions() {
  return (
    <div className="ml-[7px] flex w-[33px] flex-col gap-4 border-l border-[#a0a0a0] pt-2 pl-[11px] shadow-[inset_1px_0_0_#fff]">
      <button type="button" aria-label="Importar" className="w-4">
        <Icon box="0 0 48 48" size="size-4">
          <Floppy />
          <path d="M1 31L18 15V25H38V37H18V47Z" fill="#14e014" stroke="#0a7a0a" strokeWidth="2" />
        </Icon>
      </button>
      <button type="button" aria-label="Guardar en biblioteca" className="w-4">
        <Icon box="0 0 48 48" size="size-4">
          <Floppy />
          <path d="M38 31L22 15V23H2L8 37H22V47Z" fill="#f51414" stroke="#8a0a0a" strokeWidth="2" />
        </Icon>
      </button>
      <button type="button" aria-label="Exportar ficha" className="w-4">
        <Icon box="0 0 48 48" size="size-4">
          <path d="M4 5H34V46H4Z" fill="#fff" stroke="#111" strokeWidth="3" />
          <path d="M9 14H16M9 23H16M9 32H16M9 40H16M20 23H29M20 32H29M20 40H29" stroke="#bbb" strokeWidth="4" />
          <path d="M47 1V18L41 13L30 24L24 18L35 7L30 1Z" fill="#ff1b2e" />
        </Icon>
      </button>
    </div>
  )
}

function UnitEditor() {
  const [type, setType] = useState('constante')
  const [mode, setMode] = useState('mixto')
  return (
    <main className="flex min-w-0 flex-1 flex-col">
      <h2 className="h-[14px] w-[107px] bg-[#e1e1e1] pl-4 leading-[14px] [clip-path:polygon(13px_0,calc(100%-14px)_0,100%_100%,0_100%)]">
        Unidad terminal
      </h2>
      <div className="flex-1 border-r border-[#c0c0c0] bg-[#e1e1e1] p-[7px] pr-1.5">
        <div className={`flex h-10 items-center px-[9px] ${panel}`}>
          <label htmlFor="nombre" className="w-[43px] pt-0.5">Nombre</label>
          <input id="nombre" defaultValue="Equipo de rendimiento constante" className={`${field} w-[262px]`} />
        </div>
        <div className={`mt-1.5 flex justify-center gap-1.5 py-[9px] ${panel}`}>
          {unitTypes.map((t) => (
            <TileButton key={t.id} label={t.label} active={t.id === type} onClick={() => setType(t.id)}>{t.icon}</TileButton>
          ))}
        </div>
        <h2 className="h-[33px] pl-[3px] text-[12px] leading-[34px] font-bold">
          Equipo de rendimiento constante
        </h2>
        <div className="flex">
          <div className="min-w-0 flex-1">
            <div className={`flex justify-center gap-1.5 py-[9px] ${panel}`}>
              {modes.map((m) => (
                <TileButton key={m.id} label={m.label} active={m.id === mode} onClick={() => setMode(m.id)}>
                  {m.icon(m.id === mode ? '#aad4ff' : '#e2e2d8')}
                </TileButton>
              ))}
            </div>
            <div className="my-1.5 grid grid-cols-2 gap-1.5">
              <EnergyCard title="Calefacción" prefix="cal" value="0.92" vector="Gas natural" />
              <EnergyCard title="Refrigeración" prefix="ref" value="2.00" vector="Electricidad" />
            </div>
            <HeatRecovery />
          </div>
          <SideActions />
        </div>
      </div>
    </main>
  )
}

export default function App() {
  return (
    <div className="flex min-h-screen flex-col border-t border-r-2 border-b border-l-2 border-[#0b3a82] bg-[#1860aa] pr-[3px] pb-1 pl-[3px] font-['Liberation_Sans',Arial,sans-serif] text-[11px] leading-[14px] text-black">
      <Header />
      <Ribbon />
      <div className="flex flex-1 bg-[#b4b4b4] p-[7px]">
        <aside className="flex w-[328px] shrink-0 flex-col">
          <ProjectTree />
          <div className="flex h-[7px] items-center justify-center gap-[2px]">
            {[0, 1, 2, 3].map((i) => <span key={i} className="size-[2px] bg-[#666]" />)}
          </div>
          <ModelView />
        </aside>
        <div className="flex w-2 flex-col items-center justify-center gap-[2px]">
          {[0, 1, 2, 3].map((i) => <span key={i} className="size-[2px] bg-[#666]" />)}
        </div>
        <UnitEditor />
      </div>
    </div>
  )
}
